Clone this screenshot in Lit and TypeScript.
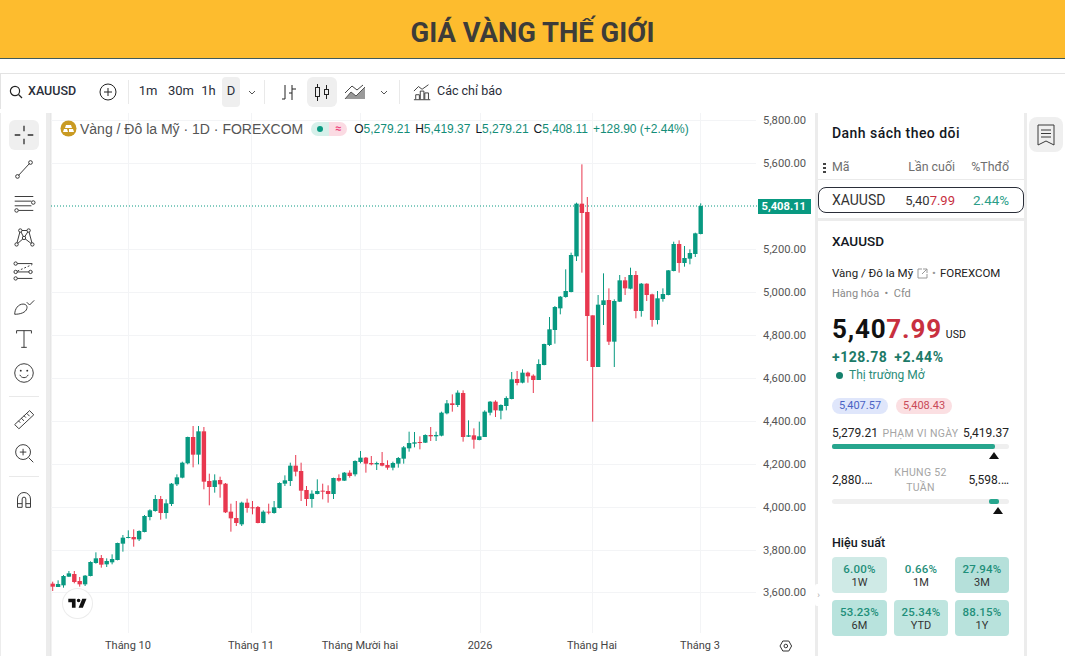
import {LitElement, css, html, svg} from "lit"
import {customElement} from "lit/decorators.js"

type Row = [string, number, number, number, number]

// rows read off 3x crops, so y = top + value / 3
const crop = (top: number, rows: Row[]) =>
    rows.map(([c, a, b, hi, lo]) => ({c, open: top + a / 3, close: top + b / 3, hi: top + hi / 3, lo: top + lo / 3}))

const candles = [
    ...crop(420, [
        ["r", 488, 497, 482, 510], ["g", 489, 498, 478, 498], ["g", 465, 493, 462, 500], ["g", 457, 467, 450, 468],
        ["r", 459, 483, 450, 487], ["r", 480, 490, 468, 497], ["g", 464, 490, 462, 495], ["g", 423, 465, 421, 466],
        ["g", 412, 426, 394, 428], ["r", 411, 431, 402, 440], ["g", 420, 430, 412, 438], ["g", 414, 424, 400, 430],
        ["g", 366, 417, 365, 418], ["g", 350, 368, 342, 392], ["g", 348, 351, 328, 352], ["r", 348, 355, 325, 377],
        ["g", 330, 355, 328, 360], ["g", 285, 333, 282, 334], ["g", 268, 288, 265, 298], ["g", 234, 270, 222, 272],
        ["r", 234, 276, 225, 296], ["g", 247, 276, 235, 293], ["g", 188, 249, 186, 255], ["g", 169, 190, 160, 195],
        ["g", 125, 170, 122, 172], ["g", 48, 127, 47, 130], ["r", 48, 101, 15, 139], ["g", 31, 101, 15, 130],
        ["r", 31, 182, 18, 205], ["r", 180, 198, 158, 253], ["g", 178, 198, 160, 215], ["r", 177, 190, 167, 230],
        ["r", 188, 274, 186, 276], ["r", 272, 292, 248, 332], ["r", 291, 306, 240, 315], ["g", 245, 310, 242, 315],
        ["r", 245, 261, 233, 275], ["r", 259, 261, 240, 280], ["r", 258, 306, 255, 307], ["g", 272, 306, 268, 307],
        ["r", 272, 275, 248, 280], ["g", 259, 276, 240, 278], ["g", 186, 261, 184, 262], ["g", 178, 188, 163, 195],
        ["g", 134, 180, 125, 195], ["r", 134, 152, 102, 166], ["r", 150, 209, 125, 240], ["r", 207, 234, 195, 255],
        ["g", 218, 234, 208, 260], ["g", 210, 219, 175, 220], ["r", 209, 212, 188, 235], ["r", 210, 219, 193, 245],
        ["g", 171, 219, 170, 234], ["r", 171, 179, 160, 182], ["g", 155, 179, 153, 180], ["r", 155, 165, 148, 170],
    ]),
    ...crop(330, [
        ["g", 390, 430, 388, 436], ["g", 380, 393, 360, 397], ["r", 380, 398, 378, 425], ["r", 396, 400, 375, 403],
        ["g", 396, 400, 392, 417], ["r", 396, 404, 363, 406], ["r", 402, 410, 388, 416], ["g", 396, 410, 392, 418],
        ["g", 381, 398, 378, 410], ["g", 349, 383, 345, 398], ["g", 336, 352, 302, 362], ["g", 334, 338, 303, 349],
        ["r", 333, 336, 316, 355], ["g", 312, 335, 310, 336], ["r", 312, 316, 288, 330], ["g", 312, 316, 302, 330],
        ["g", 245, 314, 242, 316], ["g", 217, 247, 207, 250], ["r", 217, 222, 190, 242], ["g", 185, 222, 178, 228],
        ["r", 186, 318, 178, 332], ["g", 313, 317, 268, 318], ["r", 313, 326, 292, 353], ["g", 316, 327, 272, 328],
        ["g", 242, 318, 238, 318], ["g", 212, 245, 210, 253], ["r", 212, 238, 208, 258], ["g", 222, 239, 220, 265],
        ["g", 201, 225, 196, 238], ["g", 145, 204, 123, 205], ["r", 144, 156, 120, 163], ["g", 125, 155, 115, 157],
        ["r", 125, 136, 122, 155], ["r", 134, 147, 130, 186], ["g", 99, 147, 85, 147], ["g", 39, 102, 38, 103],
    ]),
    ...crop(150, [
        ["g", 535, 582, 498, 585], ["g", 468, 537, 465, 578], ["g", 437, 472, 435, 490], ["g", 420, 438, 355, 440],
        ["g", 312, 423, 305, 424], ["g", 158, 316, 155, 330], ["r", 158, 186, 40, 365], ["r", 183, 495, 138, 630],
        ["r", 493, 648, 493, 812], ["g", 461, 648, 432, 648], ["g", 448, 462, 367, 522], ["r", 447, 572, 412, 582],
        ["g", 450, 572, 445, 648], ["g", 388, 452, 372, 453], ["r", 388, 412, 378, 432], ["g", 372, 413, 350, 415],
        ["r", 372, 480, 360, 502], ["g", 398, 480, 396, 497], ["r", 398, 432, 397, 450], ["r", 430, 507, 428, 527],
        ["g", 442, 507, 420, 520], ["g", 429, 444, 412, 452], ["g", 358, 432, 357, 433], ["g", 279, 360, 272, 361],
        ["r", 279, 336, 268, 365], ["g", 321, 336, 285, 347], ["g", 306, 323, 295, 340], ["g", 247, 309, 245, 318],
        ["g", 165, 249, 157, 250],
    ]),
]

const prices = [
    ["5,800.00", 119], ["5,600.00", 162], ["5,200.00", 248], ["5,000.00", 291], ["4,800.00", 334], ["4,600.00", 377],
    ["4,400.00", 420], ["4,200.00", 463], ["4,000.00", 506], ["3,800.00", 549], ["3,600.00", 591],
] as [string, number][]
const months = [["Tháng 10", 128], ["Tháng 11", 251], ["Tháng Mười hai", 360], ["2026", 480], ["Tháng Hai", 592], ["Tháng 3", 700]] as [string, number][]

const GREEN = "#089981"
const RED = "#e8384f"

const ic = (body: unknown, size = 28) => html`<svg width=${size} height=${size} viewBox="0 0 28 28" fill="none" stroke="currentColor">${body}</svg>`

const tools = [
    svg`<path d="M14 4v6M14 18v6M4 14h6M18 14h6" stroke-width="1.4"/>`,
    svg`<path d="M8 21 20 8"/><circle cx="7" cy="22" r="2"/><circle cx="21" cy="7" r="2"/>`,
    svg`<path d="M4 7h20M4 12h18M4 17h18M8 22h16"/><circle cx="24" cy="13.5" r="1.9" fill="#fff"/><circle cx="6" cy="22" r="1.9" fill="#fff"/>`,
    svg`<path d="M6 22 10 7l4 8 5-8 4 15M6 22l8-7 9 7M10 7l9 0"/><circle cx="6" cy="22" r="1.8" fill="#fff"/><circle cx="10" cy="7" r="1.8" fill="#fff"/><circle cx="14" cy="15" r="1.8" fill="#fff"/><circle cx="19" cy="7" r="1.8" fill="#fff"/><circle cx="23" cy="22" r="1.8" fill="#fff"/>`,
    svg`<path d="M6 6h17M6 15h17M6 22h17"/><path d="M7 14 23 7" stroke-dasharray="2 2"/><circle cx="5" cy="6" r="1.8" fill="#fff"/><circle cx="5" cy="15" r="1.8" fill="#fff"/><circle cx="21" cy="15" r="1.8" fill="#fff"/><circle cx="5" cy="22" r="1.8" fill="#fff"/>`,
    svg`<path d="M4 24c0-6 4-11 9-11 3 0 5 2 4 5-1 4-7 6-13 6ZM17 11l3 3 5-5"/>`,
    svg`<path d="M6 8V5h16v3M14 5v18M11 23h6"/>`,
    svg`<circle cx="14" cy="14" r="10"/><path d="M9.5 16c1 2 2.500 3 4.500 3s3.500-1 4.500-3"/><circle cx="10.500" cy="11.500" r="1" fill="currentColor" stroke="none"/><circle cx="17.500" cy="11.500" r="1" fill="currentColor" stroke="none"/>`,
    null,
    svg`<path d="M4 20 20 5l4.500 4.500L8.500 24.500ZM8 16l2 2M11 13l3 3M14 10.500l2 2M17 8l3 3"/>`,
    svg`<circle cx="13" cy="13" r="8"/><path d="M13 9.500v7M9.500 13h7M19 19l5 5"/>`,
    null,
    svg`<path d="M7 23v-9a7 7 0 0 1 14 0v9h-5v-9a2 2 0 0 0-4 0v9ZM7 19h5M16 19h5"/>`,
]

@customElement("app-root")
export class AppRoot extends LitElement {
    static styles = css`
      :host {
        display: block;
        width: 1065px;
        height: 656px;
        overflow: hidden;
        background: #fff;
        font-family: Roboto, "Liberation Sans", sans-serif;
        color: #131722;
      }

      .banner {
        height: 58px;
        box-sizing: content-box;
        background: #fdbc2e;
        border-bottom: 1px solid #3f5a5c;
        display: flex;
        align-items: center;
        justify-content: center;
        font-size: 27.4px;
        font-weight: 700;
        color: #3d3c39;
      }

      .banner span {
        transform: translateY(4px);
      }

      .toolbar {
        margin-top: 14px;
        height: 35px;
        border-top: 1px solid #e3e3e3;
        border-left: 1px solid #e3e3e3;
        display: flex;
        align-items: center;
        font-size: 13px;
        color: #2a2e39;
        box-sizing: content-box;
      }

      .search {
        display: flex;
        align-items: center;
        gap: 5px;
        margin-left: 8px;
        width: 90px;
        font-weight: 500;
        font-size: 12.5px;
      }

      .search span {
        padding-bottom: 2px;
      }

      .sep {
        width: 1px;
        height: 24px;
        background: #e9e9e9;
      }

      .interval {
        height: 30px;
        box-sizing: border-box;
        padding-bottom: 2px;
        display: flex;
        align-items: center;
        justify-content: center;
        border-radius: 4px;
      }

      .btn {
        display: flex;
        align-items: center;
        justify-content: center;
        height: 30px;
        border-radius: 6px;
      }

      .active {
        background: #efefef;
      }

      .indicators {
        margin: 0 4px 0 13px;
      }

      .indicators-label {
        font-size: 12.5px;
        padding-bottom: 2px;
      }

      .main {
        height: 544px;
        margin-top: 4px;
        display: flex;
        background: #ececec;
        position: relative;
      }

      .rail {
        width: 45px;
        margin-left: 1px;
        margin-right: 4px;
        background: #fff;
        display: flex;
        flex-direction: column;
        align-items: center;
        padding-top: 7px;
        color: #2e2e2e;
      }

      .tool {
        width: 30px;
        height: 30px;
        margin-bottom: 4px;
        display: flex;
        align-items: center;
        justify-content: center;
        border-radius: 6px;
        flex: none;
      }

      .tool svg {
        width: 26px;
        height: 26px;
      }

      .rail hr {
        width: 30px;
        border: 0;
        border-top: 1px solid #e9e9e9;
        margin: 4px 0 7px;
      }

      .chart {
        width: 765px;
        background: #fff;
        position: relative;
        flex: none;
      }

      .chart > svg {
        display: block;
      }

      .legend {
        position: absolute;
        left: 10px;
        top: 7px;
        display: flex;
        align-items: center;
        font-size: 12px;
        white-space: nowrap;
        color: #131722;
      }

      .legend .name {
        font-family: "Liberation Sans", sans-serif;
        font-size: 14px;
        color: #555;
        margin-left: 3px;
        margin-right: 8px;
      }

      .pill {
        display: flex;
        height: 14px;
        width: 36px;
        border-radius: 7px;
        overflow: hidden;
        margin-right: 7px;
      }

      .pill span {
        flex: 1;
        display: flex;
        align-items: center;
        justify-content: center;
        font-size: 11px;
        font-weight: 700;
      }

      .pill .on {
        background: #d6f0ea;
      }

      .pill .on::before {
        content: "";
        width: 6px;
        height: 6px;
        border-radius: 50%;
        background: #089981;
      }

      .pill .off {
        background: #fbdbe3;
        color: #ec407a;
      }

      .ohlc {
        display: flex;
        gap: 5px;
        font-family: "Liberation Sans", sans-serif;
        font-size: 12px;
        letter-spacing: -0.02px;
      }

      .ohlc b {
        font-weight: 400;
        color: #138d78;
      }

      .logo {
        position: absolute;
        left: 13px;
        top: 476px;
        width: 29px;
        height: 29px;
        border-radius: 50%;
        background: #fff;
        box-shadow: 0 0 0 1px #ececec;
        display: flex;
        align-items: center;
        justify-content: center;
      }

      .handle {
        position: absolute;
        left: 815px;
        top: 471px;
        width: 7px;
        height: 22px;
        background: #fff;
        border-radius: 2px;
        color: #aaa;
        font-size: 9px;
        display: flex;
        align-items: center;
        justify-content: center;
      }

      .side {
        width: 206px;
        margin-left: 3px;
        display: flex;
        flex-direction: column;
        gap: 3px;
        flex: none;
      }

      .watch {
        height: 105px;
        background: #fff;
        position: relative;
      }

      .watch h3 {
        margin: 0;
        padding: 12px 0 0 14px;
        font-size: 14px;
        font-weight: 500;
        letter-spacing: 0.45px;
        line-height: 17px;
      }

      .cols {
        height: 26px;
        margin-top: 12px;
        padding-top: 5px;
        box-sizing: border-box;
        border-bottom: 1px solid #eaeaea;
        display: grid;
        grid-template-columns: 60px 63px 54px;
        padding-left: 14px;
        font-size: 12.4px;
        color: #6f6f6f;
        line-height: 16px;
      }

      .cols span,
      .row > span {
        text-align: right;
        white-space: nowrap;
      }

      .cols span:first-child,
      .row > span:first-child {
        text-align: left;
      }

      .dots {
        position: absolute;
        left: 5px;
        top: 49px;
        width: 3px;
        height: 12px;
        background: radial-gradient(circle, #444 1.2px, transparent 1.4px) 0 0 / 3px 4px;
      }

      .row {
        height: 26px;
        margin-top: 7px;
        box-sizing: border-box;
        width: 206px;
        border: 1px solid #2a2e39;
        border-radius: 8px;
        display: grid;
        grid-template-columns: 60px 63px 54px;
        padding-left: 13px;
        align-items: center;
        font-size: 14px;
        color: #333;
      }

      .row .last {
        font-size: 13px;
      }

      .row .teal {
        font-size: 13.4px;
      }

      .red {
        color: #c8303f;
      }

      .teal {
        color: #2a9d87;
      }

      .details {
        flex: 1;
        background: #fff;
        padding: 12px 15px 0 14px;
      }

      .sym {
        font-size: 13.5px;
        font-weight: 500;
        line-height: 16px;
      }

      .desc {
        margin-top: 17px;
        display: flex;
        align-items: center;
        gap: 4px;
        font-size: 11.5px;
        line-height: 14px;
        color: #222;
      }

      .desc svg {
        color: #999;
      }

      .kind {
        margin-top: 7px;
        font-size: 11px;
        line-height: 13px;
        color: #8a8a8a;
      }

      .price {
        margin-top: 14px;
        font-size: 26px;
        line-height: 30px;
        font-weight: 700;
        letter-spacing: 0.8px;
        color: #111;
        display: flex;
        align-items: baseline;
      }

      .price small {
        font-size: 10.5px;
        font-weight: 400;
        letter-spacing: 0;
        margin-left: 4px;
      }

      .delta {
        margin-top: -1px;
        font-size: 14px;
        line-height: 16px;
        font-weight: 700;
        letter-spacing: 0.5px;
        color: #1c7a68;
        display: flex;
        gap: 7px;
      }

      .status {
        margin-top: 2px;
        margin-left: 4px;
        display: flex;
        align-items: center;
        gap: 6px;
        font-size: 12px;
        line-height: 16px;
        color: #2a8c78;
      }

      .status i {
        width: 7px;
        height: 7px;
        border-radius: 50%;
        background: #15806c;
      }

      .quotes {
        margin-top: 15px;
        display: flex;
        gap: 8px;
      }

      .quotes span {
        height: 16px;
        width: 56px;
        border-radius: 8px;
        font-size: 11px;
        line-height: 16px;
        text-align: center;
      }

      .bid {
        background: #dfe6fb;
        color: #4a62c4;
      }

      .ask {
        background: #fbdfe2;
        color: #c94a58;
      }

      .range {
        margin-top: 12px;
        width: 177px;
        display: flex;
        justify-content: space-between;
        align-items: center;
        font-size: 12px;
        line-height: 15px;
        color: #222;
        white-space: nowrap;
      }

      .range em {
        font-style: normal;
        font-size: 10.5px;
        letter-spacing: 0.3px;
        color: #a5a5a5;
        text-align: center;
        white-space: normal;
      }

      .track {
        width: 177px;
        height: 5px;
        margin-top: 3px;
        border-radius: 3px;
        background: #efefef;
        position: relative;
      }

      .track b {
        position: absolute;
        top: 0;
        bottom: 0;
        background: #27a68e;
        border-radius: 2px;
      }

      .track i {
        position: absolute;
        top: 8px;
        border-left: 5px solid transparent;
        border-right: 5px solid transparent;
        border-bottom: 7px solid #111;
      }

      .perf {
        margin-top: 31px;
        font-size: 12.5px;
        font-weight: 500;
        line-height: 16px;
      }

      .grid {
        margin-top: 6px;
        width: 177px;
        display: grid;
        grid-template-columns: 55px 54px 54px;
        column-gap: 7px;
        row-gap: 7px;
      }

      .cell {
        height: 36px;
        border-radius: 4px;
        text-align: center;
        font-size: 11px;
        line-height: 14px;
        color: #333;
        padding-top: 5px;
        box-sizing: border-box;
      }

      .cell b {
        display: block;
        font-weight: 500;
        font-size: 11.5px;
        letter-spacing: 0.2px;
        color: #1f8f7a;
      }

      .strip {
        flex: 1;
        margin-left: 3px;
        background: #fff;
        display: flex;
        justify-content: center;
        padding-top: 4px;
        color: #3a3a3a;
      }

      .strip div {
        width: 34px;
        height: 35px;
        border-radius: 8px;
        background: #efefef;
        display: flex;
        align-items: center;
        justify-content: center;
      }
    `

    renderToolbar() {
        const chevron = html`<svg width="12" height="30" viewBox="0 0 12 30" fill="none" stroke="#555"><path d="m3 14 3 3 3-3"/></svg>`
        return html`
            <div class="toolbar">
                <div class="search">
                    <svg width="14" height="14" viewBox="0 0 14 14" fill="none" stroke="#222" stroke-width="1.2"><circle cx="6" cy="6" r="4.600"/><path d="m9.500 9.500 3.500 3.500"/></svg>
                    <span>XAUUSD</span>
                </div>
                <svg width="18" height="18" viewBox="0 0 18 18" fill="none" stroke="#222" style="margin:0 11px 0 0"><circle cx="9" cy="9" r="8"/><path d="M9 5v8M5 9h8"/></svg>
                <span class="sep"></span>
                <span class="interval" style="width:38px">1m</span>
                <span class="interval" style="width:28px">30m</span>
                <span class="interval" style="width:27px">1h</span>
                <span class="interval active" style="width:18px">D</span>
                <span class="btn" style="width:24px">${chevron}</span>
                <span class="sep"></span>
                <span class="btn" style="width:42px">
                    <svg width="18" height="20" viewBox="0 0 18 20" fill="none" stroke="#222" style="margin-left:6px"><path d="M2 17h3V3M5 8h0M12 3v15M12 7h4M9 11h3"/></svg>
                </span>
                <span class="btn active" style="width:30px">
                    <svg width="18" height="20" viewBox="0 0 18 20" fill="none" stroke="#222"><rect x="2.500" y="5.500" width="4" height="9"/><path d="M4.500 2v3.500M4.500 14.500V19"/><rect x="11.500" y="7.500" width="4" height="5"/><path d="M13.500 3v4.500M13.500 12.500V17"/></svg>
                </span>
                <span class="btn" style="width:37px">
                    <svg width="24" height="18" viewBox="0 0 24 18"><path d="M1 16 7 9l5 4 9-9v12Z" fill="#9a9a9a"/><path d="M1 10 8 3l5 4 6-5" fill="none" stroke="#444"/><path d="M1 16 7 9l5 4 9-9" fill="none" stroke="#555"/></svg>
                </span>
                <span class="btn" style="width:20px">${chevron}</span>
                <span class="sep" style="margin-left:5px"></span>
                <svg class="indicators" width="20" height="20" viewBox="0 0 22 20" fill="none" stroke="#333"><path d="M1 9 6 4l4 3 7-5"/><path d="M3 18v-5h4v5M8 18V9h4v9M13 18v-7h4v7M1 18.500h18"/></svg>
                <span class="indicators-label">Các chỉ báo</span>
            </div>`
    }

    renderChart() {
        const step = 648 / 120
        const grid = svg`
            ${prices.map(([, y]) => svg`<line x1="51" x2="756" y1=${y + 0.5} y2=${y + 0.5} stroke="#f3f4f6"/>`)}
            ${[128, 251, 360, 480, 592, 700].map(x => svg`<line x1=${x + 0.5} x2=${x + 0.5} y1="112" y2="632" stroke="#f3f4f6"/>`)}`
        const bars = candles.map((k, i) => {
            const x = 52.7 + i * step
            const fill = k.c === "g" ? GREEN : RED
            return svg`<rect x=${x - 0.5} y=${k.hi} width="1" height=${k.lo - k.hi} fill=${fill}/>
                <rect x=${x - 2.2} y=${k.open} width="4.400" height=${Math.max(k.close - k.open, 1)} fill=${fill}/>`
        })
        return html`
            <div class="chart">
                <svg width="765" height="544" viewBox="50 112 765 544" font-family="Roboto, sans-serif">
                    <rect x="50" y="112" width="1.500" height="544" fill="#e6e6e6"/>
                    ${grid}
                    <line x1="51" x2="757" y1="205" y2="205" stroke=${GREEN} stroke-dasharray="1 2"/>
                    ${bars}
                    ${prices.map(([t, y]) => svg`<text x="806" y=${y + 3.5} text-anchor="end" font-size="11.200" fill="#555">${t}</text>`)}
                    <rect x="758" y="198" width="53" height="15" fill=${GREEN}/>
                    <text x="806" y="209" text-anchor="end" font-size="11.200" font-weight="700" fill="#fff">5,408.11</text>
                    ${months.map(([t, x]) => svg`<text x=${x} y="648" text-anchor="middle" font-size="11" fill="#444">${t}</text>`)}
                    <path d="m780 645 2.800-5h6l2.800 5-2.800 5h-6Z" fill="none" stroke="#333"/>
                    <circle cx="785.800" cy="645" r="1.800" fill="none" stroke="#333"/>
                </svg>
                <div class="legend">
                    <svg width="17" height="17" viewBox="0 0 17 17"><circle cx="8.500" cy="8.500" r="8" fill="#c99a22"/><path d="M6 5h5l1 3H5ZM3 12h5l-1-3H4ZM9 9h4l1 3H9Z" fill="#fff"/></svg>
                    <span class="name">Vàng / Đô la Mỹ · 1D · FOREXCOM</span>
                    <span class="pill"><span class="on"></span><span class="off">≈</span></span>
                    <span class="ohlc">
                        <span>O<b>5,279.21</b></span>
                        <span>H<b>5,419.37</b></span>
                        <span>L<b>5,279.21</b></span>
                        <span>C<b>5,408.11</b></span>
                        <b>+128.90 (+2.44%)</b>
                    </span>
                </div>
                <div class="logo">
                    <svg width="22" height="17" viewBox="0 0 36 28"><path d="M14 6H2v6h6v9h6V6Zm12 15h-7l6-15h7l-6 15Zm-7-9a3 3 0 1 0 0-6 3 3 0 0 0 0 6Z" fill="#111"/></svg>
                </div>
            </div>`
    }

    renderSide() {
        const perf = [
            ["6.00%", "1W", "#cfeae6"], ["0.66%", "1M", "#fff"], ["27.94%", "3M", "#b5e0da"],
            ["53.23%", "6M", "#b8e3dd"], ["25.34%", "YTD", "#bfe5df"], ["88.15%", "1Y", "#b8e2dc"],
        ]
        return html`
            <div class="side">
                <div class="watch">
                    <h3>Danh sách theo dõi</h3>
                    <span class="dots"></span>
                    <div class="cols"><span>Mã</span><span>Lần cuối</span><span>%Thđổ</span></div>
                    <div class="row"><span>XAUUSD</span><span class="last">5,40<span class="red">7.99</span></span><span class="teal">2.44%</span></div>
                </div>
                <div class="details">
                    <div class="sym">XAUUSD</div>
                    <div class="desc">
                        Vàng / Đô la Mỹ
                        <svg width="11" height="11" viewBox="0 0 11 11" fill="none" stroke="currentColor"><path d="M5 1H1v9h9V6M6 1h4v4M10 1 5 6"/></svg>
                        <span style="color:#999">•</span> FOREXCOM
                    </div>
                    <div class="kind">Hàng hóa &nbsp;•&nbsp; Cfd</div>
                    <div class="price"><span>5,40</span><span class="red">7.99</span><small>USD</small></div>
                    <div class="delta"><span>+128.78</span><span>+2.44%</span></div>
                    <div class="status"><i></i>Thị trường Mở</div>
                    <div class="quotes"><span class="bid">5,407.57</span><span class="ask">5,408.43</span></div>
                    <div class="range"><span>5,279.21</span><em>PHẠM VI NGÀY</em><span>5,419.37</span></div>
                    <div class="track"><b style="left:0;width:163px"></b><i style="left:157px"></i></div>
                    <div class="range" style="margin-top:16px">
                        <span>2,880.…</span><em style="width:70px">KHUNG 52 TUẦN</em><span>5,598.…</span>
                    </div>
                    <div class="track" style="margin-top:4px"><b style="left:157px;width:10px"></b><i style="left:161px"></i></div>
                    <div class="perf">Hiệu suất</div>
                    <div class="grid">
                        ${perf.map(([v, l, bg]) => html`<div class="cell" style="background:${bg}"><b>${v}</b>${l}</div>`)}
                    </div>
                </div>
            </div>`
    }

    render() {
        return html`
            <div class="banner"><span>GIÁ VÀNG THẾ GIỚI</span></div>
            ${this.renderToolbar()}
            <div class="main">
                <div class="rail">
                    ${tools.map((t, i) => t ? html`<div class="tool ${i === 0 ? "active" : ""}">${ic(t)}</div>` : html`<hr>`)}
                </div>
                ${this.renderChart()}
                ${this.renderSide()}
                <span class="handle">›</span>
                <div class="strip">
                    <div>
                        <svg width="22" height="24" viewBox="0 0 22 24" fill="none" stroke="currentColor"><path d="M3 2h16v20l-8-4-8 4ZM6 7h10M6 10.500h10M6 14h10"/></svg>
                    </div>
                </div>
            </div>`
    }
}
